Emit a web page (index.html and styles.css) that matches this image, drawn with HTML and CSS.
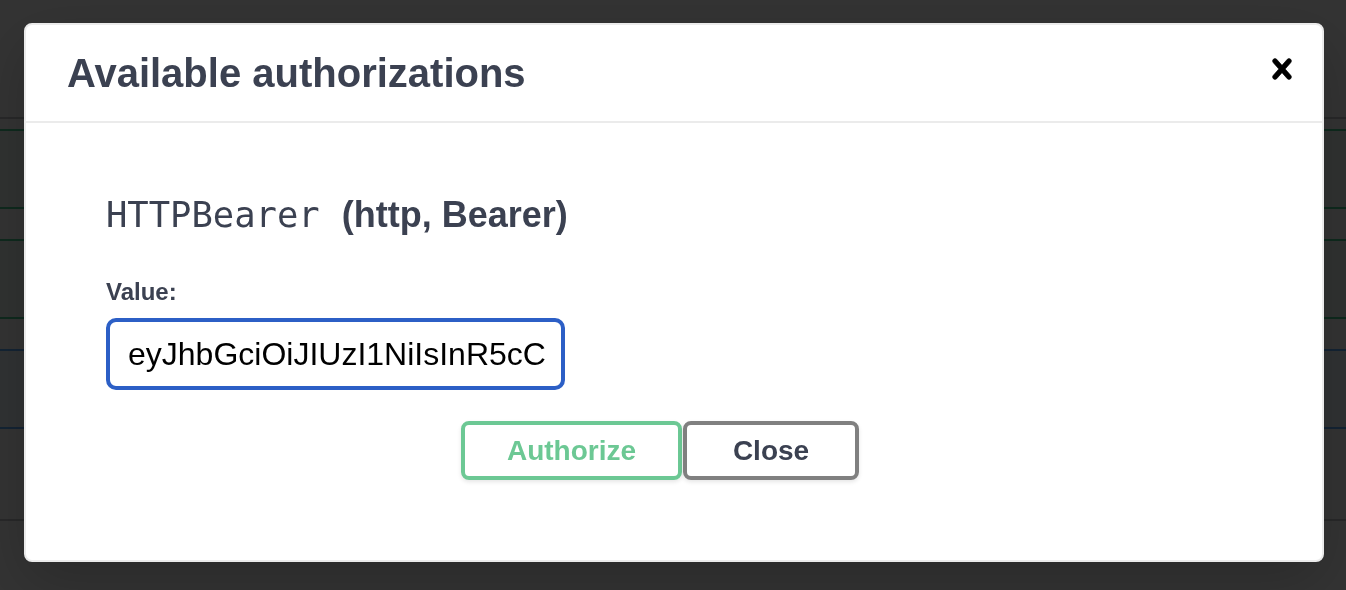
FILE: index.html
```html
<!DOCTYPE html>
<html lang="en">
<head>
<meta charset="utf-8">
<title>Available authorizations</title>
<link rel="stylesheet" href="styles.css">
</head>
<body>
<div class="page">
  <div class="section-head"></div>
  <div class="opblock opblock-post"></div>
  <div class="opblock opblock-post"></div>
  <div class="opblock opblock-get"></div>
  <div class="section-foot"></div>
</div>
<div class="backdrop"></div>
<div class="dialog">
  <div class="modal">
    <div class="modal-header">
      <h3 class="modal-title">Available authorizations</h3>
      <button class="close-modal" type="button" aria-label="Close">
        <svg width="40" height="40" viewBox="0 0 20 20" aria-hidden="true"><path d="M14.348 14.849c-.469.469-1.229.469-1.697 0L10 11.819l-2.651 3.029c-.469.469-1.229.469-1.697 0-.469-.469-.469-1.229 0-1.697l2.758-3.15-2.759-3.152c-.469-.469-.469-1.228 0-1.697.469-.469 1.228-.469 1.697 0L10 8.183l2.651-3.031c.469-.469 1.228-.469 1.697 0 .469.469.469 1.229 0 1.697l-2.758 3.152 2.758 3.15c.469.469.469 1.229 0 1.698z"/></svg>
      </button>
    </div>
    <div class="modal-content">
      <div class="auth-container">
        <h4 class="scheme-title"><code class="scheme-name">HTTPBearer</code>&nbsp; (http, Bearer)</h4>
        <label class="value-label" for="token">Value:</label>
        <input class="value-input" id="token" type="text" value="eyJhbGciOiJIUzI1NiIsInR5cC">
        <div class="auth-btn-wrapper">
          <button class="btn btn-authorize" type="button">Authorize</button>
          <button class="btn btn-done" type="button">Close</button>
        </div>
      </div>
    </div>
  </div>
</div>
</body>
</html>
```

FILE: styles.css
```css
* {
  box-sizing: border-box;
}

html, body {
  margin: 0;
  padding: 0;
  height: 100%;
  overflow: hidden;
  background: #ffffff;
  font-family: "Liberation Sans", Arial, Helvetica, sans-serif;
  color: #3b4151;
}

/* underlying page, dimmed by the backdrop */
.page {
  display: flex;
  flex-direction: column;
}

.section-head {
  height: 119px;
  border-bottom: 2px solid rgba(59, 65, 81, 0.3);
  margin-bottom: 10px;
}

.opblock {
  height: 80px;
  border-top: 2px solid #49cc90;
  border-bottom: 2px solid #49cc90;
  margin-bottom: 30px;
}

.opblock-post {
  background: rgba(73, 204, 144, 0.1);
  border-color: #49cc90;
}

.opblock-get {
  background: rgba(97, 175, 254, 0.1);
  border-color: #61affe;
  margin-bottom: 90px;
}

.section-foot {
  height: 2px;
  background: rgba(59, 65, 81, 0.3);
}

.backdrop {
  position: fixed;
  inset: 0;
  background: rgba(0, 0, 0, 0.8);
}

.dialog {
  position: fixed;
  inset: 0;
  padding: 23px 0 0 24px;
}

.modal {
  width: 1300px;
  background: #ffffff;
  border: 2px solid #ebebeb;
  border-radius: 8px;
  box-shadow: 0 20px 60px 0 rgba(0, 0, 0, 0.2);
}

.modal-header {
  display: flex;
  align-items: flex-start;
  padding: 24px 0;
  border-bottom: 2px solid #ebebeb;
}

.modal-title {
  flex: 1;
  margin: 0 0 0 41px;
  font-size: 40px;
  line-height: 48px;
  font-weight: 700;
  color: #3b4151;
}

.close-modal {
  background: none;
  border: none;
  padding: 0 20px;
  margin: 0;
  height: 40px;
  cursor: pointer;
}

.close-modal svg {
  display: block;
  fill: #000000;
  stroke: #000000;
  stroke-width: 0.3;
}

.modal-content {
  padding: 40px;
}

.auth-container {
  padding: 20px 40px;
}

.scheme-title {
  margin: 10px 0 0;
  font-size: 36px;
  line-height: 44px;
  font-weight: 700;
  color: #3b4151;
  white-space: nowrap;
}

.scheme-name {
  font-family: "DejaVu Sans Mono", monospace;
  font-size: 35.5px;
  font-weight: 400;
  color: #3b4151;
  margin-right: 2px;
}

.value-label {
  display: block;
  margin-top: 40px;
  font-size: 24px;
  line-height: 30px;
  font-weight: 700;
  color: #3b4151;
}

.value-input {
  display: block;
  width: 459px;
  height: 72px;
  margin: 11px 0 10px;
  padding: 0 10px 0 18px;
  border: 4px solid #2c5fc6;
  border-radius: 10px;
  outline: none;
  background: #ffffff;
  font-family: "Liberation Sans", Arial, Helvetica, sans-serif;
  font-size: 32px;
  color: #000000;
}

.auth-btn-wrapper {
  display: flex;
  justify-content: center;
  gap: 1px;
  padding: 21px 0 20px;
}

.btn {
  height: 59px;
  padding: 0;
  border: 4px solid #808080;
  border-radius: 8px;
  background: transparent;
  box-shadow: 0 2px 4px rgba(0, 0, 0, 0.1);
  font-family: "Liberation Sans", Arial, Helvetica, sans-serif;
  font-size: 28px;
  line-height: 51px;
  font-weight: 700;
  text-align: center;
  color: #3b4151;
  cursor: pointer;
}

.btn-authorize {
  width: 221px;
  border-color: #6cc894;
  color: #6cc894;
}

.btn-done {
  width: 176px;
  margin-right: 28px;
}
```
